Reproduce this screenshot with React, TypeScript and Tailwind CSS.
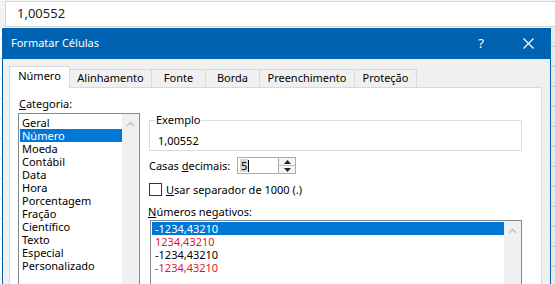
const tabs = [
  { label: "Número", w: "w-[61px]", active: true },
  { label: "Alinhamento", w: "w-[82px]" },
  { label: "Fonte", w: "w-[54px]" },
  { label: "Borda", w: "w-[54px]" },
  { label: "Preenchimento", w: "w-[95px]" },
  { label: "Proteção", w: "w-[62px]" },
];

const categorias = [
  "Geral",
  "Número",
  "Moeda",
  "Contábil",
  "Data",
  "Hora",
  "Porcentagem",
  "Fração",
  "Científico",
  "Texto",
  "Especial",
  "Personalizado",
];

const negativos = [
  { text: "-1234,43210", red: false },
  { text: "1234,43210", red: true },
  { text: "-1234,43210", red: false },
  { text: "-1234,43210", red: true },
];

function ChevronUp() {
  return (
    <svg width="9" height="6" viewBox="0 0 9 6">
      <path d="M1 5 L4.5 1.5 L8 5" fill="none" stroke="#c4c4c4" strokeWidth="1.6" />
    </svg>
  );
}

function ScrollTrack() {
  return (
    <div className="w-[17px] shrink-0 bg-[#f0f0f0] flex justify-center pt-[7px]">
      <div className="h-[6px]">
        <ChevronUp />
      </div>
    </div>
  );
}

export default function App() {
  return (
    <div className="w-[555px] h-[284px] overflow-hidden bg-white bg-[repeating-linear-gradient(to_bottom,transparent_0,transparent_18px,#dadada_18px,#dadada_19px,transparent_19px,transparent_20px)] font-['Segoe_UI','Noto_Sans',sans-serif] text-[11px] text-black whitespace-nowrap">
      {/* barra de fórmulas */}
      <div className="h-[28px] bg-[#f3f3f3] pt-[1px]">
        <div className="ml-[5px] h-[26px] border-l border-t border-b border-[#d4d4d4] bg-white flex items-center pl-[11px] text-[13px] text-[#222]">
          1,00552
        </div>
      </div>

      <div className="flex">
        <div className="w-[2px] shrink-0" />
        <div className="w-[549px] h-[256px] shrink-0 border-x border-[#0063b1] bg-[#f0f0f0] flex flex-col">
          {/* título */}
          <div className="h-[31px] bg-[#0063b1] text-white flex items-center pl-[8px]">
            <span className="text-[11px]">Formatar Células</span>
            <span className="ml-auto text-[13px] mr-[39px]">?</span>
            <svg width="11" height="11" viewBox="0 0 11 11" className="mr-[16px]">
              <path d="M0.5 0.5 L10.5 10.5 M10.5 0.5 L0.5 10.5" stroke="#fff" strokeWidth="1.2" />
            </svg>
          </div>

          <div className="flex-1 pt-[7px] pl-[6px] pr-[8px] flex flex-col">
            {/* abas */}
            <div className="flex items-end h-[21px]">
              {tabs.map((t, i) => (
                <div
                  key={t.label}
                  className={
                    t.active
                      ? `${t.w} h-[22px] -mb-px relative bg-white border border-b-0 border-[#d9d9d9] flex items-center justify-center pb-[2px]`
                      : `${t.w} h-[18px] bg-[#f0f0f0] border-t border-r border-[#d9d9d9] flex items-center justify-center ${i === 0 ? "border-l" : ""}`
                  }
                >
                  {t.label}
                </div>
              ))}
            </div>

            {/* painel */}
            <div className="flex-1 border border-b-0 border-[#d9d9d9] bg-white pt-[8px] pl-[8px] flex">
              {/* categoria */}
              <div className="w-[122px] shrink-0 flex flex-col">
                <div className="leading-[16px] pl-[1px]">
                  <span className="underline">C</span>ategoria:
                </div>
                <div className="mt-[1px] flex-1 border border-b-0 border-[#828790] flex">
                  <div className="flex-1 pt-[2px] pl-[1px]">
                    {categorias.map((c) => (
                      <div
                        key={c}
                        className={`h-[13px] leading-[13px] pl-[2px] ${c === "Número" ? "bg-[#0078d7] text-white" : ""}`}
                      >
                        {c}
                      </div>
                    ))}
                  </div>
                  <ScrollTrack />
                </div>
              </div>

              {/* lado direito */}
              <div className="ml-[9px] w-[373px] shrink-0 flex flex-col">
                <fieldset className="mt-[16px] h-[39px] border border-[#dcdcdc] pl-[5px]">
                  <legend className="px-[1px] leading-[16px]">Exemplo</legend>
                  <div className="pl-[3px] pt-[5px] leading-[16px]">1,00552</div>
                </fieldset>

                <div className="mt-[6px] h-[17px] flex items-center">
                  <div className="w-[88px] leading-[16px]">
                    Casas <span className="underline">d</span>ecimais:
                  </div>
                  <div className="w-[59px] h-[17px] border border-[#adadad] bg-white flex">
                    <div className="flex-1 flex items-center pl-[2px]">
                      <span className="bg-[#d6d6d6] leading-[13px] px-[1px]">5</span>
                      <span className="w-px h-[12px] bg-black" />
                    </div>
                    <div className="w-[17px] border-l border-[#adadad] flex flex-col bg-[#f5f5f5]">
                      <div className="flex-1 flex items-center justify-center border-b border-[#c4c4c4]">
                        <svg width="7" height="4" viewBox="0 0 7 4">
                          <path d="M0 4 L3.5 0 L7 4 Z" fill="#222" />
                        </svg>
                      </div>
                      <div className="flex-1 flex items-center justify-center">
                        <svg width="7" height="4" viewBox="0 0 7 4">
                          <path d="M0 0 L3.5 4 L7 0 Z" fill="#222" />
                        </svg>
                      </div>
                    </div>
                  </div>
                </div>

                <div className="mt-[9px] h-[13px] flex items-center">
                  <div className="w-[13px] h-[13px] border border-[#333] bg-white" />
                  <div className="ml-[4px] leading-[16px]">
                    <span className="underline">U</span>sar separador de 1000 (.)
                  </div>
                </div>

                <div className="mt-[8px] -ml-px leading-[16px]">
                  <span className="underline">N</span>úmeros negativos:
                </div>
                <div className="ml-[1px] w-[372px] flex-1 border border-b-0 border-[#828790] flex">
                  <div className="flex-1 pt-[1px] pl-[1px]">
                    {negativos.map((n, i) => (
                      <div
                        key={i}
                        className={`h-[13px] leading-[13px] pl-[3px] ${
                          i === 0 ? "bg-[#0078d7] text-white" : n.red ? "text-[#e8112d]" : ""
                        }`}
                      >
                        {n.text}
                      </div>
                    ))}
                  </div>
                  <ScrollTrack />
                </div>
              </div>
            </div>
          </div>
        </div>
        <div className="flex-1 bg-[#e9e9e9] bg-[repeating-linear-gradient(to_bottom,transparent_0,transparent_18px,#c8c8c8_18px,#c8c8c8_19px,transparent_19px,transparent_20px)]" />
      </div>
    </div>
  );
}
